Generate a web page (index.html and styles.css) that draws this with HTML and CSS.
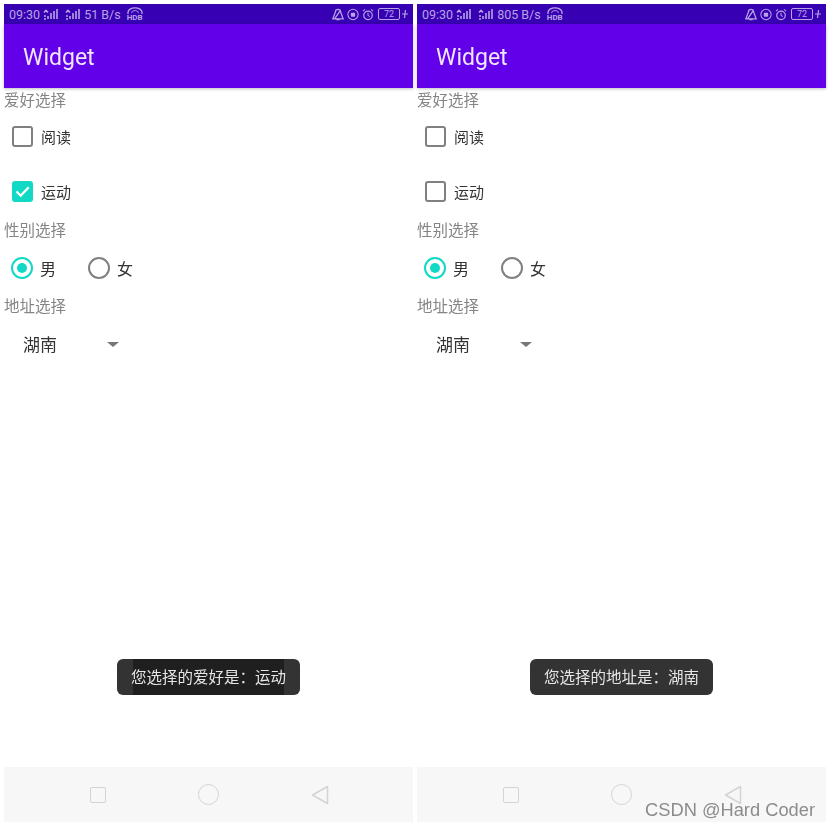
FILE: index.html
```html
<!DOCTYPE html>
<html>
<head>
  <title>Widget</title>
  <link rel="stylesheet" href="styles.css">
</head>
<body>
  <svg class="defs" width="0" height="0">
    <symbol id="signal" viewBox="0 0 16 12">
      <path d="M1 11h2M1 8h2M5 11V8M1 4.500l2-2 2 2M8 11V5M11 11V3M14 11V1" fill="none" stroke="currentColor" stroke-width="1.600"/>
    </symbol>
    <symbol id="hd" viewBox="0 0 20 8">
      <path d="M2 8V6a8 5 0 0 1 16 0v2" fill="none" stroke="currentColor" stroke-width="1.500"/>
      <path d="M6 7a4 3 0 0 1 8 0" fill="none" stroke="currentColor"/>
    </symbol>
    <symbol id="bell" viewBox="0 0 14 14">
      <path d="M1 12 4 4a3 3 0 0 1 6 0l3 8zM5 13h4M3 12l7-10" fill="none" stroke="currentColor" stroke-width="1.500"/>
    </symbol>
    <symbol id="lock" viewBox="0 0 14 14">
      <circle cx="7" cy="7" r="6" fill="none" stroke="currentColor" stroke-width="1.200"/>
      <rect x="4.500" y="5" width="5" height="4.500" rx="1" fill="currentColor"/>
    </symbol>
    <symbol id="alarm" viewBox="0 0 14 14">
      <circle cx="7" cy="8" r="5" fill="none" stroke="currentColor" stroke-width="1.400"/>
      <path d="M7 5v3l2 1.500M1 3l2.500-2M13 3l-2.500-2" fill="none" stroke="currentColor" stroke-width="1.200"/>
    </symbol>
    <symbol id="bolt" viewBox="0 0 6 10">
      <path d="M0 5h6M3.500 1 2.500 9" fill="none" stroke="currentColor" stroke-width="1.200"/>
    </symbol>
    <symbol id="check" viewBox="0 0 21 21">
      <path d="M4.500 10.500l4.200 4.200 8-8.500" fill="none" stroke="#fff" stroke-width="2.300"/>
    </symbol>
  </svg>

  <div class="phone">
    <div class="status-bar">
      <div class="status-group">
        <span>09:30</span>
        <svg class="ic-signal"><use href="#signal"/></svg>
        <svg class="ic-signal second"><use href="#signal"/></svg>
        <span>51 B/s</span>
        <span class="hd-icon"><svg><use href="#hd"/></svg><b>HDB</b></span>
      </div>
      <div class="status-group">
        <svg class="ic-small"><use href="#bell"/></svg>
        <svg class="ic-small"><use href="#lock"/></svg>
        <svg class="ic-small"><use href="#alarm"/></svg>
        <span class="battery">72</span>
        <svg class="ic-bolt"><use href="#bolt"/></svg>
      </div>
    </div>
    <div class="app-bar">Widget</div>
    <div class="content">
      <div class="label first">爱好选择</div>
      <div class="check-row"><span class="check-box"></span><span class="row-text">阅读</span></div>
      <div class="check-row"><span class="check-box checked"><svg><use href="#check"/></svg></span><span class="row-text">运动</span></div>
      <div class="label">性别选择</div>
      <div class="radio-row">
        <span class="radio-item"><span class="radio checked"></span><span class="row-text">男</span></span>
        <span class="radio-item"><span class="radio"></span><span class="row-text">女</span></span>
      </div>
      <div class="label">地址选择</div>
      <div class="spinner"><span class="spinner-text row-text">湖南</span><span class="arrow"></span></div>
    </div>
    <div class="toast patched"><span>您选择的爱好是：运动</span></div>
    <div class="nav-bar">
      <span class="nav-square"></span>
      <span class="nav-circle"></span>
      <svg class="nav-back" viewBox="0 0 18 20"><path d="M16.500 1.500v17L1.500 10z" fill="none" stroke="#d4d4d4" stroke-width="1.500" stroke-linejoin="round"/></svg>
    </div>
  </div>

  <div class="phone">
    <div class="status-bar">
      <div class="status-group">
        <span>09:30</span>
        <svg class="ic-signal"><use href="#signal"/></svg>
        <svg class="ic-signal second"><use href="#signal"/></svg>
        <span>805 B/s</span>
        <span class="hd-icon"><svg><use href="#hd"/></svg><b>HDB</b></span>
      </div>
      <div class="status-group">
        <svg class="ic-small"><use href="#bell"/></svg>
        <svg class="ic-small"><use href="#lock"/></svg>
        <svg class="ic-small"><use href="#alarm"/></svg>
        <span class="battery">72</span>
        <svg class="ic-bolt"><use href="#bolt"/></svg>
      </div>
    </div>
    <div class="app-bar">Widget</div>
    <div class="content">
      <div class="label first">爱好选择</div>
      <div class="check-row"><span class="check-box"></span><span class="row-text">阅读</span></div>
      <div class="check-row"><span class="check-box"></span><span class="row-text">运动</span></div>
      <div class="label">性别选择</div>
      <div class="radio-row">
        <span class="radio-item"><span class="radio checked"></span><span class="row-text">男</span></span>
        <span class="radio-item"><span class="radio"></span><span class="row-text">女</span></span>
      </div>
      <div class="label">地址选择</div>
      <div class="spinner"><span class="spinner-text row-text">湖南</span><span class="arrow"></span></div>
    </div>
    <div class="toast"><span>您选择的地址是：湖南</span></div>
    <div class="nav-bar">
      <span class="nav-square"></span>
      <span class="nav-circle"></span>
      <svg class="nav-back" viewBox="0 0 18 20"><path d="M16.500 1.500v17L1.500 10z" fill="none" stroke="#d4d4d4" stroke-width="1.500" stroke-linejoin="round"/></svg>
    </div>
  </div>

  <div class="watermark">CSDN @Hard Coder</div>
</body>
</html>
```

FILE: styles.css
```css
html, body { height: 100%; }
body {
  margin: 0;
  padding: 4px 5px 5px 4px;
  box-sizing: border-box;
  display: flex;
  gap: 4px;
  position: relative;
  overflow: hidden;
  background: #fff;
  font-family: Roboto, "Noto Sans CJK SC", sans-serif;
}
.defs { position: absolute; }
.phone {
  width: 409px;
  position: relative;
  display: flex;
  flex-direction: column;
  filter: blur(0.5px);
}

/* status bar */
.status-bar {
  height: 20px;
  padding: 0 5px;
  display: flex;
  align-items: center;
  justify-content: space-between;
  background: #3700b3;
  color: #b8a4e6;
  font-size: 12.500px;
}
.status-group { display: flex; align-items: center; gap: 3px; }
.ic-signal { width: 16px; height: 12px; }
.ic-signal.second { margin-left: 3px; }
.ic-small { width: 12px; height: 13px; }
.ic-bolt { width: 6px; height: 10px; margin-left: -1px; }
.hd-icon { display: flex; flex-direction: column; align-items: center; width: 20px; height: 15px; margin-left: 1px; }
.hd-icon svg { width: 18px; height: 7px; }
.hd-icon b { font-size: 8px; line-height: 8px; }
.battery {
  width: 20px;
  height: 10px;
  margin-left: 1px;
  border: 1px solid #b8a4e6;
  border-radius: 2px;
  font-size: 9px;
  line-height: 10px;
  text-align: center;
}

.app-bar {
  height: 64px;
  padding: 2px 0 0 19px;
  box-sizing: border-box;
  display: flex;
  align-items: center;
  background: #6200ea;
  color: #f0e6fd;
  font-size: 23px;
  box-shadow: 0 1px 3px rgba(0,0,0,0.25);
}

/* form */
.content { flex: 1; }
.label {
  height: 22px;
  line-height: 24px;
  font-size: 15.500px;
  color: #858585;
}
.label.first { height: 21px; line-height: 26px; }
.row-text { padding-top: 3px; }
.check-row {
  height: 55px;
  padding-left: 8px;
  display: flex;
  align-items: center;
  gap: 8px;
  font-size: 15px;
  line-height: 1;
  color: #333;
}
.check-box {
  width: 17px;
  height: 17px;
  border: 2px solid #808080;
  border-radius: 3px;
  position: relative;
}
.check-box.checked { background: #12d9c4; border-color: #12d9c4; }
.check-box svg { position: absolute; left: -2px; top: -2px; width: 21px; height: 21px; }
.radio-row {
  height: 54px;
  padding-left: 7px;
  display: flex;
  align-items: center;
  gap: 32px;
}
.radio-item { display: flex; align-items: center; gap: 7px; font-size: 16px; line-height: 1; color: #333; }
.radio {
  width: 18px;
  height: 18px;
  border: 2px solid #808080;
  border-radius: 50%;
  position: relative;
}
.radio.checked { border-color: #12d9c4; }
.radio.checked::after {
  content: "";
  position: absolute;
  left: 4px;
  top: 4px;
  width: 10px;
  height: 10px;
  border-radius: 50%;
  background: #12d9c4;
}
.spinner {
  height: 54px;
  padding-left: 19px;
  display: flex;
  align-items: center;
  font-size: 17px;
  line-height: 1;
  color: #333;
}
.spinner-text { width: 84px; }
.arrow {
  width: 0;
  height: 0;
  border-left: 6px solid transparent;
  border-right: 6px solid transparent;
  border-top: 5px solid #777;
}

/* toast lies over the page */
.toast {
  position: absolute;
  left: 113px;
  top: 655px;
  width: 183px;
  height: 36px;
  display: flex;
  justify-content: center;
  background: #333;
  border-radius: 6px;
  overflow: hidden;
}
.toast span {
  height: 100%;
  line-height: 39px;
  font-size: 15.500px;
  color: #e6e6e6;
  white-space: nowrap;
}
.toast.patched span { background: linear-gradient(#1f1f1f, #1f1f1f) center / 151px 100% no-repeat; }

/* nav bar */
.nav-bar {
  height: 55px;
  padding-left: 1px;
  display: flex;
  align-items: center;
  justify-content: center;
  gap: 92px;
  background: #f7f7f7;
}
.nav-square {
  width: 14px;
  height: 14px;
  border: 1.500px solid #d4d4d4;
  border-radius: 2px;
}
.nav-circle {
  width: 19px;
  height: 19px;
  border: 1.500px solid #d4d4d4;
  border-radius: 50%;
}
.nav-back { width: 18px; height: 20px; }

.watermark {
  position: absolute;
  right: 16px;
  bottom: 6px;
  font-family: "Liberation Sans", sans-serif;
  font-size: 18.300px;
  color: #8c8c8c;
}
```
